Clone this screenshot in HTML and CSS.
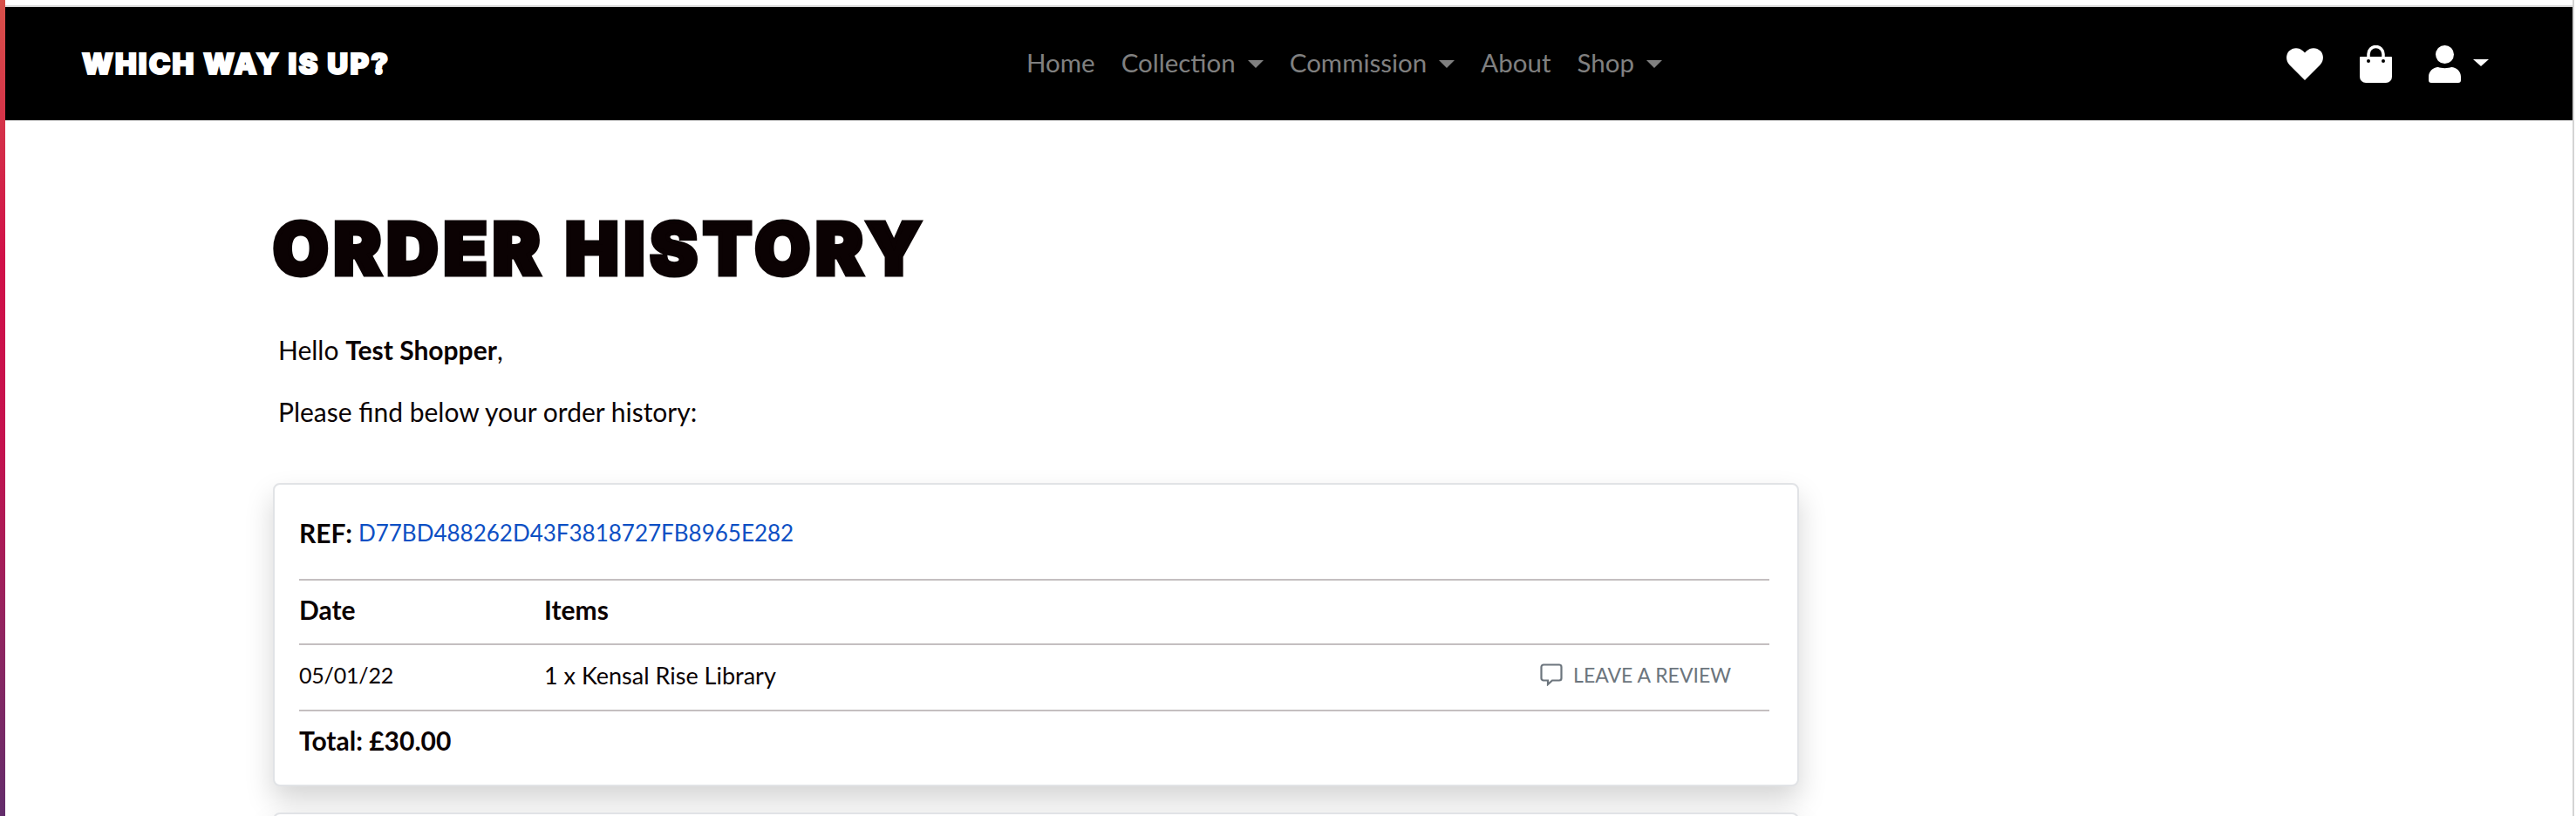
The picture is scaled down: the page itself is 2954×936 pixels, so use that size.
FILE: index.html
```html
<html>
<head>
  <title>Order history</title>
  <link rel="stylesheet" href="styles.css">
</head>
<body>
  <div class="page">
    <nav class="navbar">
      <a class="brand" href="#">WHICH WAY IS UP?</a>
      <ul class="nav-links">
        <li><a href="#">Home</a></li>
        <li><a class="dropdown" href="#">Collection</a></li>
        <li><a class="dropdown" href="#">Commission</a></li>
        <li><a href="#">About</a></li>
        <li><a class="dropdown" href="#">Shop</a></li>
      </ul>
      <div class="nav-icons">
        <svg class="icon-heart" width="42" height="37" viewBox="0 0 42 37"><path fill="#fff" d="M21 37 3.500 19.500C-1 15-1 7.500 3 3.500 7.500-1 14.500-1 19 3.500L21 5.500 23 3.500C27.500-1 34.500-1 39 3.500 43 7.500 43 15 38.500 19.500Z"/></svg>
        <svg class="icon-bag" width="37" height="43" viewBox="0 0 37 43"><path fill="#fff" d="M1 13H36a1 1 0 0 1 1 1V36a7 7 0 0 1-7 7H7a7 7 0 0 1-7-7V14a1 1 0 0 1 1-1Z"/><path fill="none" stroke="#fff" stroke-width="3.500" d="M10 18V10a8.500 8.500 0 0 1 17 0V18"/><circle cx="10" cy="18" r="2" fill="#000"/><circle cx="27" cy="18" r="2" fill="#000"/></svg>
        <span class="user">
          <svg class="icon-user" width="37" height="43" viewBox="0 0 37 43"><circle cx="18.500" cy="10.500" r="10.500" fill="#fff"/><path fill="#fff" d="M11 25C14 26.500 23 26.500 26 25 32 25 37 30 37 36V40a3 3 0 0 1-3 3H3a3 3 0 0 1-3-3V36C0 30 5 25 11 25Z"/></svg>
          <i class="user-caret"></i>
        </span>
      </div>
    </nav>

    <main class="content">
      <h1>ORDER HISTORY</h1>
      <p class="intro first">Hello <b>Test Shopper</b>,</p>
      <p class="intro">Please find below your order history:</p>

      <section class="order">
        <div class="order-ref"><b>REF:</b> <a href="#">D77BD488262D43F3818727FB8965E282</a></div>
        <div class="row head"><b class="col-date">Date</b><b>Items</b></div>
        <div class="row item">
          <span class="col-date">05/01/22</span>
          <span class="col-items">1 x Kensal Rise Library</span>
          <a class="review" href="#">
            <svg width="26" height="26" viewBox="0 0 26 26"><path fill="none" stroke="#6c757d" stroke-width="2.200" d="M4 1.500H22a2.500 2.500 0 0 1 2.500 2.500V17a2.500 2.500 0 0 1-2.500 2.500H14L9 24V19.500H4A2.500 2.500 0 0 1 1.500 17V4A2.500 2.500 0 0 1 4 1.500Z"/></svg>
            LEAVE A REVIEW
          </a>
        </div>
        <div class="row total"><b>Total: £30.00</b></div>
      </section>

      <section class="order"></section>
    </main>
  </div>
</body>
</html>
```

FILE: styles.css
```css
html, body {
  margin: 0;
  height: 936px;
  overflow: hidden;
}
body {
  font-family: "Lato", sans-serif;
  font-size: 30px;
  color: #0b0203;
  background: #fff;
  padding-left: 6px;
  box-sizing: border-box;
  background-image: linear-gradient(180deg, #d8514a 0%, #d01048 32%, #c4124e 55%, #8f2560 78%, #632d6b 100%);
  background-size: 6px 100%;
  background-repeat: no-repeat;
}
a {
  text-decoration: none;
}

.page {
  padding-top: 6px;
  margin-right: 2px;
  height: 930px;
  overflow: hidden;
  background: #fff;
  border-right: 2px solid #d4d4d4;
}
.navbar {
  height: 130px;
  border-top: 2px solid #dcdcdc;
  background: #000;
  display: flex;
  align-items: center;
  padding-left: 88px;
}
.brand {
  color: #fff;
  font-family: "Inter", sans-serif;
  font-weight: 900;
  font-size: 33px;
  letter-spacing: 2.200px;
  -webkit-text-stroke: 2px #fff;
  width: 1083px;
  white-space: nowrap;
}
.nav-links {
  display: flex;
  gap: 30px;
  list-style: none;
  margin: 0 0 4px;
  padding: 0;
  width: 1445px;
}
.nav-links a {
  color: #808080;
  font-size: 29.500px;
}
.dropdown::after {
  content: "";
  display: inline-block;
  margin-left: 14px;
  vertical-align: 5px;
  border-top: 9px solid #808080;
  border-left: 9px solid transparent;
  border-right: 9px solid transparent;
}
.nav-icons {
  display: flex;
  align-items: center;
  gap: 42px;
}
.user {
  display: flex;
  align-items: center;
  gap: 14px;
}
.user-caret {
  border-top: 8px solid #fff;
  border-left: 9px solid transparent;
  border-right: 9px solid transparent;
  margin-top: -2px;
}

.content {
  padding: 0 0 0 307px;
}
h1 {
  margin: 0;
  padding-top: 104px;
  font-family: "Inter", sans-serif;
  font-weight: 900;
  font-size: 82px;
  line-height: 88px;
  letter-spacing: 6px;
  -webkit-text-stroke: 5px #0b0203;
}
.intro {
  margin: 0;
  padding-left: 6px;
  line-height: 40px;
  margin-top: 31px;
}
.intro.first {
  margin-top: 51px;
}
b {
  font-weight: 700;
}

.order {
  width: 1750px;
  box-sizing: border-box;
  height: 348px;
  margin-top: 62px;
  padding: 0 32px 0 28px;
  background: #fff;
  border: 2px solid #e1e3e6;
  border-radius: 8px;
  box-shadow: 0 16px 32px rgba(0, 0, 0, .17);
  margin-bottom: 30px;
}
.order + .order {
  margin-top: 0;
}
.order-ref {
  height: 108px;
  box-sizing: border-box;
  padding-top: 2px;
  display: flex;
  align-items: center;
  gap: 7px;
  white-space: pre;
}
.order-ref a {
  color: #0d50c4;
  font-size: 26px;
}
.row {
  display: flex;
  align-items: center;
  box-sizing: border-box;
  border-top: 2px solid #c4bfc0;
  height: 74px;
  padding-bottom: 6px;
}
.col-date {
  width: 281px;
}
.item {
  height: 76px;
}
.item .col-date {
  font-size: 25px;
  letter-spacing: -.2px;
}
.col-items {
  font-size: 27px;
}
.review {
  margin-left: auto;
  margin-right: 44px;
  color: #6c757d;
  font-size: 23px;
  display: flex;
  align-items: center;
  gap: 12px;
}
```
